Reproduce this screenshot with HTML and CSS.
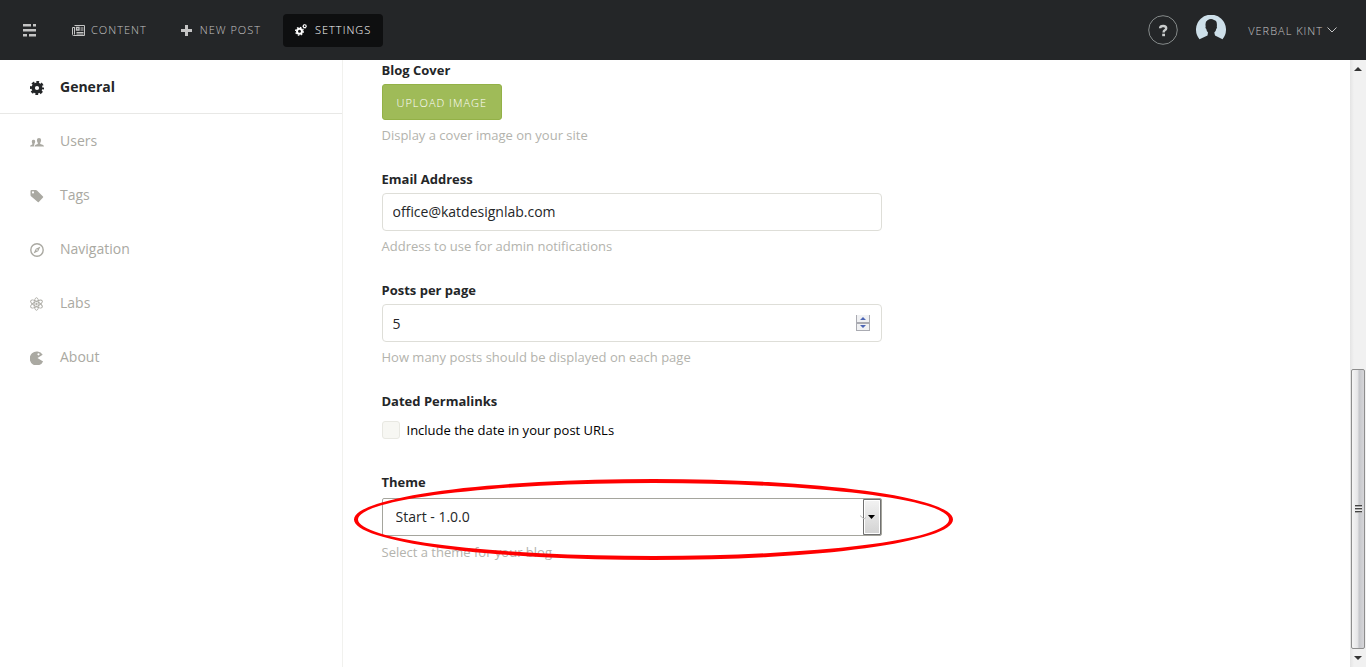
FILE: index.html
```html
<!DOCTYPE html>
<html lang="en">
<head>
<meta charset="utf-8">
<title>Settings - General</title>
<link rel="stylesheet" href="styles.css">
</head>
<body>
<header class="topbar">
  <button class="menu" type="button" aria-label="Menu">
    <svg width="13" height="13" viewBox="0 0 13 13" fill="currentColor"><path d="M0 0h8v2.500H0zM10 0h3v2.500h-3zM0 5h13v2.500H0zM0 10h4v2.500H0zM6 10h7v2.500H6z"/></svg>
  </button>
  <nav class="mainnav">
    <a class="navlink" href="#content">
      <svg width="13" height="11" viewBox="0 0 13 11" fill="none" stroke="currentColor"><path d="M2.500 .5h10v10h-11q-1 0-1-1v-7h2M2.500 2v7.500M8.500 3h3M8.500 5h3M4.500 7.500h7M4.500 9h7"/><path d="M4.500 2.500h2.500v2.500H4.500z" stroke-width="1.300"/></svg>
      <span>CONTENT</span>
    </a>
    <a class="navlink post" href="#new">
      <svg width="11" height="11" viewBox="0 0 11 11" fill="currentColor"><path d="M4 0h3v4h4v3H7v4H4V7H0V4h4z"/></svg>
      <span>NEW POST</span>
    </a>
    <a class="navlink active" href="#settings">
      <svg width="12" height="12" viewBox="0 0 12 12" fill="none" stroke="currentColor"><circle cx="4.500" cy="7.300" r="2.500" stroke-width="2"/><circle cx="4.500" cy="7.300" r="3.900" stroke-width="1.200" stroke-dasharray="1.530 1.530"/><circle cx="9.700" cy="2.200" r="1.400" stroke-width="1.100"/><circle cx="9.700" cy="2.200" r="2" stroke-width=".7" stroke-dasharray=".8 .8"/></svg>
      <span>SETTINGS</span>
    </a>
  </nav>
  <a class="help" href="#help" aria-label="Help"><svg width="30" height="30" viewBox="0 0 30 30" fill="none" stroke="currentColor"><circle class="ring" cx="15" cy="15" r="14.300"/><path d="M12.100 13.200Q12.200 11 15.200 11q3 0 3 2.300 0 1.200-1.400 2-1.200.7-1.200 2.200" stroke-width="2.400"/><path d="M14.200 18.700h2.800v2.500h-2.800z" fill="currentColor" stroke="none"/></svg></a>
  <svg class="avatar" width="30" height="30" viewBox="0 0 30 30"><path fill="#cddfe9" d="M3.500 24.300A15 15 0 1 1 26.500 24.300L19 20.500 18.300 17.500Q20 16 20.200 14 21.300 13 20.800 11.500 21.500 5.500 18 5 15 3 11.500 5.200 8.800 6.500 9.700 11.500 9 13 10.300 14 10.600 16 12 17.500L11.500 20.500Z"/></svg>
  <button class="user" type="button">VERBAL KINT
    <svg width="10" height="6" viewBox="0 0 10 6" fill="none" stroke="currentColor"><path d="M.5.500 5 5 9.500.500"/></svg>
  </button>
</header>
<div class="body">
  <nav class="sidebar">
    <a class="item current" href="#general"><svg width="14" height="14" viewBox="0 0 14 14" fill="none" stroke="currentColor"><circle cx="7" cy="7" r="3.800" stroke-width="3.400"/><circle cx="7" cy="7" r="6" stroke-width="2.200" stroke-dasharray="2.700 2.012" stroke-dashoffset="1.350"/></svg>General</a>
    <a class="item" href="#users"><svg width="14" height="14" viewBox="0 0 14 14" fill="currentColor"><path d="M4.500 11.500Q4.500 9.700 7.800 9V8Q6.900 6.500 6.900 5 6.900 3 9 3t2.100 2q0 1.500-.9 3v1q3.800.700 3.800 2.500zM0 11.500Q0 10 2.300 9.500V8.500Q1.700 7.300 1.800 6.200 2 4.800 3.500 4.800q1.600 0 1.700 1.400 0 1.200-.700 2.300v.5Q4 10 3.900 11.500z"/></svg>Users</a>
    <a class="item" href="#tags"><svg width="14" height="14" viewBox="0 0 14 14"><path fill="currentColor" fill-rule="evenodd" d="M1.500 1h4.300q.7 0 1.200.5l6 6q.500.500 0 1L8.800 12.900q-.500.500-1 0L1 7.200Q.5 6.700.5 6V2q0-1 1-1zM3 2.300a1.100 1.100 0 1 0 0 2.200 1.100 1.100 0 0 0 0-2.200z"/></svg>Tags</a>
    <a class="item" href="#navigation"><svg width="14" height="14" viewBox="0 0 14 14"><circle cx="7" cy="7" r="6.200" fill="none" stroke="currentColor" stroke-width="1.400"/><path fill="currentColor" fill-rule="evenodd" d="M10.500 3.500 8.200 8.200 3.500 10.500 5.800 5.800zM7 6.200a.8.800 0 1 0 0 1.600.8.800 0 0 0 0-1.600z"/></svg>Navigation</a>
    <a class="item" href="#labs"><svg width="14" height="14" viewBox="0 0 14 14" fill="none" stroke="currentColor" stroke-width=".9"><ellipse cx="6.500" cy="7" rx="2.400" ry="6.300"/><ellipse cx="6.500" cy="7" rx="2.400" ry="6.500" transform="rotate(60 6.500 7)"/><ellipse cx="6.500" cy="7" rx="2.400" ry="6.500" transform="rotate(120 6.500 7)"/><circle cx="6.500" cy="7" r=".8" fill="currentColor"/></svg>Labs</a>
    <a class="item" href="#about"><svg width="14" height="14" viewBox="0 0 14 14"><path fill="currentColor" fill-rule="evenodd" d="M12.700 3.800 7.500 7l5.600 3.400A7 7 0 1 1 12.700 3.800zM8.500 2.200a1.100 1.100 0 1 0 0 2.200 1.100 1.100 0 0 0 0-2.200z"/></svg>About</a>
  </nav>
  <main class="content">
    <form class="form">
      <div class="field">
        <label for="cover">Blog Cover</label>
        <button id="cover" class="upload" type="button">UPLOAD IMAGE</button>
        <p>Display a cover image on your site</p>
      </div>
      <div class="field">
        <label for="email">Email Address</label>
        <input id="email" class="text" type="email" value="office@katdesignlab.com">
        <p>Address to use for admin notifications</p>
      </div>
      <div class="field">
        <label for="posts">Posts per page</label>
        <div class="control">
          <input id="posts" class="text" type="number" value="5">
          <svg class="spinner" width="14" height="16" viewBox="0 0 14 16"><path fill="#aaabb2" d="M0 0h14v16H0z"/><path fill="#f0f1f3" d="M1 0h12v7H1zM1 9h12v6H1z"/><path fill="#4c65b5" d="M4 5 7 2l3 3zM4 10h6l-3 3z"/></svg>
        </div>
        <p>How many posts should be displayed on each page</p>
      </div>
      <div class="field dated">
        <span class="title">Dated Permalinks</span>
        <label class="check"><input type="checkbox">Include the date in your post URLs</label>
      </div>
      <div class="field theme">
        <label for="theme">Theme</label>
        <div class="control">
          <select id="theme"><option>Start - 1.0.0</option></select>
          <svg class="drop" width="18" height="36" viewBox="0 0 18 36"><defs><linearGradient id="dropfill" x2="0" y2="1"><stop stop-color="#f3f3f3"/><stop offset="1" stop-color="#d2d2d2"/></linearGradient></defs><path fill="url(#dropfill)" stroke="#707070" d="M.5.500h17v35H.5z"/><path fill="none" stroke="#fff" d="M1.500 34.500v-33h15v33z"/><path d="M5 16h7l-3.500 4z"/></svg>
          <svg class="chevron" width="6" height="5" viewBox="0 0 6 5"><path fill="none" stroke="#bbb" d="M0 .5 4 4 6 2.500"/></svg>
          <span class="highlight"></span>
        </div>
        <p>Select a theme for your blog</p>
      </div>
    </form>
  </main>
  <div class="scrollbar">
    <svg width="8" height="5" viewBox="0 0 8 5"><path fill="#333" d="M0 5 4 1l4 4z"/></svg>
    <div class="thumb"><span class="grip"></span></div>
    <svg width="8" height="5" viewBox="0 0 8 5"><path fill="#333" d="M0 0h8L4 4z"/></svg>
  </div>
</div>
</body>
</html>
```
FILE: styles.css
```css
* { box-sizing: border-box; }
body {
  margin: 0;
  height: 100vh;
  display: flex;
  flex-direction: column;
  overflow: hidden;
  font-family: "Open Sans", "Noto Sans", sans-serif;
  font-size: 13px;
  line-height: 18px;
  color: #242628;
  background: #fff;
}
svg { display: block; flex: none; }
a { text-decoration: none; }
button { font-family: inherit; cursor: pointer; }

.topbar {
  flex: none;
  height: 60px;
  display: flex;
  align-items: center;
  padding: 0 29px 0 23px;
  background: #242628;
  color: #bbb;
}
.menu, .user { padding: 0; border: 0; background: none; color: #c4c4c4; }
.mainnav { display: flex; margin: 0 auto 0 24px; }
.navlink {
  display: flex;
  align-items: center;
  height: 33px;
  padding: 0 12px;
  gap: 6px;
  border-radius: 4px;
  color: #c4c4c4;
  font-size: 11px;
  font-weight: 300;
  letter-spacing: 1px;
}
.post { gap: 8px; margin: 0 10px; }
.active { gap: 8px; background: #0e0f10; color: #fff; }
.help { color: #c9cccc; }
.ring { stroke: #858a8a; }
.avatar { margin: 0 22px 0 18px; }
.user {
  display: flex;
  align-items: center;
  gap: 4px;
  font-size: 11px;
  font-weight: 300;
  letter-spacing: 1px;
}

.body { flex: 1; min-height: 0; display: flex; }
.sidebar { flex: none; box-sizing: content-box; width: 25%; border-right: 1px solid #f1f1ee; }
.item {
  display: flex;
  align-items: center;
  gap: 16px;
  height: 54px;
  padding-left: 30px;
  color: #aaa9a2;
  font-size: 14px;
}
.item svg { margin-top: 2px; }
.current { border-bottom: 1px solid #e8e8e6; color: #242628; font-weight: 700; }

.content { flex: 1; padding: 1px 39px 0; }
.form { max-width: 500px; }
.field { display: flex; flex-direction: column; align-items: flex-start; gap: 5px; margin-bottom: 26px; }
.field > label, .title { font-weight: 700; }
.field p { margin: 1px 0 0; color: #b3b3ad; }
.upload {
  height: 36px;
  padding: 0 14px;
  border: 1px solid #93b147;
  border-radius: 3px;
  background: #9fbb58;
  color: #fff;
  font-size: 11px;
  font-weight: 300;
  letter-spacing: 1px;
}
.control { position: relative; width: 100%; }
.text, select {
  display: block;
  width: 100%;
  height: 38px;
  padding: 0 10px 2px;
  border: 1px solid #deded8;
  border-radius: 4px;
  background: #fff;
  color: #242628;
  font-family: inherit;
  font-size: 14px;
}
.text[type="number"] { appearance: textfield; padding-bottom: 0; }
.spinner { position: absolute; right: 12px; top: 11px; }
.dated { gap: 11px; margin-bottom: 34px; }
.field > .check { display: flex; align-items: center; gap: 7px; color: #000; font-weight: 400; }
.check input {
  appearance: none;
  width: 18px;
  height: 18px;
  margin: 0;
  border: 1px solid #e8e8e2;
  border-radius: 3px;
  background: #f7f7f3;
}
.theme { gap: 7px; }
.theme p { margin: 0; }
select { appearance: none; padding: 0 13px 2px; border-color: #a5a59d; border-radius: 2px; }
.drop { position: absolute; right: 1px; top: 1px; }
.chevron { position: absolute; right: 16px; top: 17px; }
.highlight {
  position: absolute;
  left: -28px;
  right: -71px;
  top: -19px;
  bottom: -24px;
  border: 4px solid #f00;
  border-radius: 50%;
  pointer-events: none;
}

.scrollbar {
  flex: none;
  width: 16px;
  display: flex;
  flex-direction: column;
  align-items: center;
  padding: 6px 0;
  background: linear-gradient(90deg, #e4e4e4, #f1f1f1 4px, #f1f1f1);
}
.thumb {
  display: flex;
  align-items: center;
  justify-content: center;
  width: 14px;
  height: 47%;
  margin: auto 0 7px;
  border: 1px solid #8d8d8d;
  border-radius: 2px;
  background: linear-gradient(90deg, #f5f5f5, #e6e6e8 45%, #c6c7cb 60%, #d6d6d9);
}
.grip { width: 7px; height: 8px; background: repeating-linear-gradient(#444 0 1px, #aaa 1px 2px, #eee 2px 3px); }
```
